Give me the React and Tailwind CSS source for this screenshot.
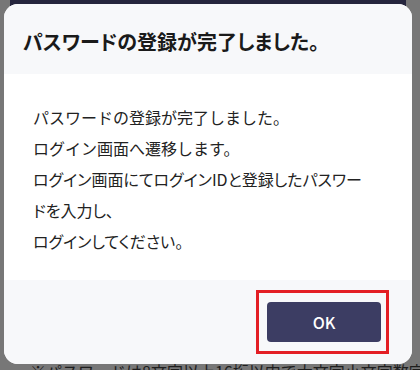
import React from "react";

const jp = { fontFamily: '"Noto Sans CJK JP", "Noto Sans", sans-serif' };

export default function App() {
  return (
    <div className="relative w-[420px] h-[370px] overflow-hidden bg-[#777777]" style={jp}>
      {/* page behind the dim */}
      <div className="mx-[10px] w-[396px] h-[6px] bg-[#25253d]" />
      <p className="absolute left-[30px] top-[359px] whitespace-nowrap text-[16px] text-[#1e1e1e]">
        ※パスワードは8文字以上16桁以内で大文字小文字数字の
      </p>

      {/* dialog */}
      <div className="absolute left-[4px] top-[4px] w-[408px] h-[360px] flex flex-col rounded-[14px] overflow-hidden bg-white">
        <div className="h-[70px] shrink-0 flex items-center pl-[19px] pt-[5px] bg-[#f7f8fa]">
          <h2 className="text-[20px] font-semibold text-[#1a1a1a] [font-feature-settings:'palt']">パスワードの登録が完了しました。</h2>
        </div>
        <div className="flex-1 px-[29px] pt-[28px] text-[16px] leading-[31px] text-[#222]">
          <p>パスワードの登録が完了しました。</p>
          <p>ログイン画面へ遷移します。</p>
          <p className="whitespace-nowrap [font-feature-settings:'palt']">ログイン画面にてログインIDと登録したパスワー</p>
          <p className="[font-feature-settings:'palt']">ドを入力し、</p>
          <p className="[font-feature-settings:'palt']">ログインしてください。</p>
        </div>
        <div className="h-[84px] shrink-0 flex items-center justify-end pr-[31px] bg-[#f7f8fa]">
          <div className="relative">
            <button className="w-[114px] h-[40px] rounded-[4px] bg-[#3c3d63] text-white text-[16px] font-medium">
              OK
            </button>
            <div className="absolute left-[-11px] top-[-12px] w-[133px] h-[64px] border-[3px] border-[#e31e24] pointer-events-none" />
          </div>
        </div>
      </div>
    </div>
  );
}
